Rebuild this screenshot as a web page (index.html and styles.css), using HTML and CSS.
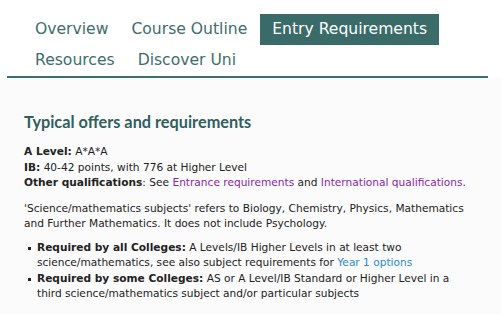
FILE: index.html
```html
<!DOCTYPE html>
<html lang="en">
<head>
  <title>Entry Requirements</title>
  <meta charset="utf-8">
  <meta name="viewport" content="width=device-width, initial-scale=1">
  <link rel="stylesheet" href="styles.css">
</head>

<body>
  <nav class="course-tabs">
    <a class="course-tabs__item" href="#">Overview</a>
    <a class="course-tabs__item" href="#">Course Outline</a>
    <a class="course-tabs__item course-tabs__item_active" href="#">Entry Requirements</a>
    <a class="course-tabs__item" href="#">Resources</a>
    <a class="course-tabs__item" href="#">Discover Uni</a>
  </nav>

  <main class="entry">
    <h2 class="entry__title">Typical offers and requirements</h2>
    <p class="entry__offers">
      <b>A Level:</b> A*A*A<br>
      <b>IB:</b> 40-42 points, with 776 at Higher Level<br>
      <b>Other qualifications</b>: See <a class="entry__link" href="#">Entrance requirements</a> and <a class="entry__link" href="#">International qualifications</a>.
    </p>
    <p class="entry__note">'Science/mathematics subjects' refers to Biology, Chemistry, Physics, Mathematics and Further Mathematics. It does not include Psychology.</p>
    <ul class="entry__list">
      <li><b>Required by all Colleges:</b> A Levels/IB Higher Levels in at least two science/mathematics, see also subject requirements for <a class="entry__link entry__link_new" href="#">Year 1 options</a></li>
      <li><b>Required by some Colleges:</b> AS or A Level/IB Standard or Higher Level in a third science/mathematics subject and/or particular subjects</li>
    </ul>
  </main>
</body>
</html>
```

FILE: styles.css
```css
*,
*::before,
*::after {
  box-sizing: border-box;
  margin: 0;
  padding: 0;
}

body {
  color: #222222;
  font-family: "DejaVu Sans", Verdana, sans-serif;
  background-color: #ffffff;
}

.course-tabs {
  display: flex;
  flex-wrap: wrap;
  width: 481px;
  margin: 14px 0 0 7px;
  padding: 0 6px 0 16px;
  border-bottom: 2px solid #3c6e6c;
}

.course-tabs__item {
  display: block;
  height: 31px;
  padding: 0 12px;
  color: #3c6e6c;
  font-size: 15.6px;
  line-height: 31px;
  text-decoration: none;
}

.course-tabs__item:nth-child(2) {
  padding: 0 13px 0 11px;
}

.course-tabs__item:nth-child(5) {
  padding: 0 11px;
}

.course-tabs__item_active {
  padding: 0 12px;
  color: #ffffff;
  background-color: #3a6b69;
}

.entry {
  padding: 32px 24px 12px;
  font-size: 10.6px;
  line-height: 15.5px;
  background-color: #fbfbfb;
}

.entry__title {
  margin-bottom: 10px;
  color: #2f5f5e;
  font-family: Lato, sans-serif;
  font-size: 16.3px;
  font-weight: 700;
  line-height: 24px;
}

.entry__offers {
  margin-bottom: 10px;
}

.entry__note {
  margin-bottom: 8px;
}

.entry__link {
  color: #8a1fb0;
  text-decoration: none;
}

.entry__link_new {
  color: #2a8ad4;
}

.entry__list {
  list-style: none;
}

.entry__list li {
  position: relative;
  padding-left: 13px;
}

.entry__list li::before {
  content: "";
  position: absolute;
  top: 7px;
  left: 4px;
  width: 3px;
  height: 3px;
  background-color: #222222;
}
```
